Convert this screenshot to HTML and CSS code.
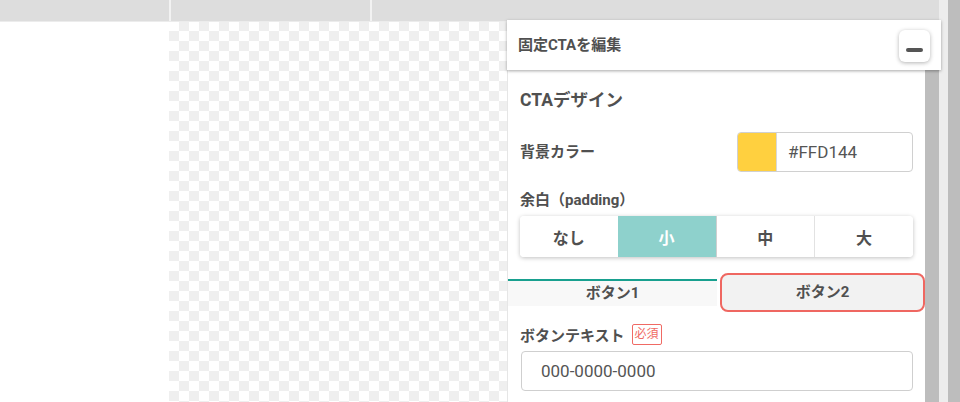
FILE: index.html
```html
<!DOCTYPE html>
<html lang="ja">
<head>
<meta charset="utf-8">
<title>固定CTAを編集</title>
<link rel="stylesheet" href="styles.css">
</head>
<body>
<div class="app">
  <div class="workspace">
    <div class="topbar">
      <div class="tb-cell tb-a"></div>
      <div class="tb-cell tb-b"></div>
      <div class="tb-cell tb-c"></div>
    </div>
    <div class="stage">
      <div class="sidebar"></div>
      <div class="canvas"></div>
    </div>

    <div class="panel">
      <div class="panel-head">
        <span class="panel-title">固定CTAを編集</span>
        <button class="min-btn" type="button" aria-label="最小化"><span class="dash"></span></button>
      </div>
      <div class="panel-body">
        <div class="panel-content">
          <div class="section">
            <h2 class="sec-title">CTAデザイン</h2>
            <div class="color-row">
              <span class="label">背景カラー</span>
              <div class="color-field">
                <span class="swatch"></span>
                <span class="color-value">#FFD144</span>
              </div>
            </div>
            <div class="label pad-label">余白（padding）</div>
            <div class="segments">
              <button class="seg" type="button">なし</button>
              <button class="seg active" type="button">小</button>
              <button class="seg" type="button">中</button>
              <button class="seg" type="button">大</button>
            </div>
          </div>
          <div class="tabs">
            <div class="tab tab-active">ボタン1</div>
            <div class="tab tab-focus">ボタン2</div>
          </div>
          <div class="section">
            <div class="field-label">
              <span class="label">ボタンテキスト</span>
              <span class="badge">必須</span>
            </div>
            <div class="text-input">000-0000-0000</div>
          </div>
        </div>
        <div class="panel-scroll"></div>
      </div>
    </div>
  </div>
  <div class="page-scroll">
    <div class="ps-track"></div>
    <div class="ps-bar"></div>
  </div>
</div>
</body>
</html>
```

FILE: styles.css
```css
* { box-sizing: border-box; }
html, body { margin: 0; padding: 0; }
body {
  width: 960px;
  height: 402px;
  overflow: hidden;
  font-family: Roboto, "Noto Sans CJK JP", sans-serif;
  color: #505050;
  background: #fff;
}
.app {
  display: flex;
  height: 402px;
}
.workspace {
  position: relative;
  width: 939px;
  display: flex;
  flex-direction: column;
}
.topbar {
  height: 22px;
  display: flex;
  background: #f2f2f2;
  gap: 2px;
  border-bottom: 1px solid #ececec;
}
.tb-cell { background: #dddddd; }
.tb-a { width: 169px; }
.tb-b { width: 199px; }
.tb-c { flex: 1; }
.stage {
  flex: 1;
  display: flex;
}
.sidebar {
  width: 169px;
  background: #fff;
}
.canvas {
  flex: 1;
  background-color: #fff;
  background-image: conic-gradient(#efefef 0 25%, #fff 0 50%, #efefef 0 75%, #fff 0);
  background-size: 20px 20px;
  background-position: 0 -1px;
}

/* floating panel */
.panel {
  position: absolute;
  left: 507px;
  top: 20px;
  width: 434px;
  bottom: 0;
  display: flex;
  flex-direction: column;
}
.panel-head {
  position: relative;
  z-index: 2;
  height: 50px;
  background: #fff;
  box-shadow: 0 1px 3px rgba(0,0,0,.35);
  display: flex;
  align-items: center;
  justify-content: space-between;
  padding: 0 11px 0 11px;
}
.panel-title {
  font-size: 15px;
  font-weight: 700;
  color: #505050;
  margin-top: -3px;
}
.min-btn {
  width: 31px;
  height: 32px;
  border: none;
  border-radius: 6px;
  background: #fff;
  box-shadow: 0 1px 4px rgba(0,0,0,.3);
  display: flex;
  align-items: flex-end;
  justify-content: center;
  padding: 0 0 10px;
  margin-top: 2px;
  margin-right: 0;
}
.dash {
  width: 17px;
  height: 4px;
  border-radius: 2px;
  background: #555;
}
.panel-body {
  flex: 1;
  width: 432px;
  display: flex;
  background: #fff;
  border-left: 1px solid #e6e6e6;
}
.panel-content {
  flex: 1;
}
.panel-scroll {
  width: 14px;
  background: #bdbdbd;
}
.section {
  padding: 0 12px;
}
.sec-title {
  margin: 18px 0 0;
  height: 24px;
  line-height: 24px;
  font-size: 17.5px;
  font-weight: 700;
  color: #505050;
}
.label {
  font-size: 15px;
  font-weight: 700;
  color: #505050;
}
.color-row {
  margin-top: 20px;
  height: 40px;
  display: flex;
  align-items: center;
  justify-content: space-between;
}
.color-row .label { margin-top: -4px; }
.color-field {
  width: 176px;
  height: 40px;
  display: flex;
  border: 1px solid #d0d0d0;
  border-radius: 4px;
  overflow: hidden;
}
.swatch {
  width: 39px;
  background: #ffd03f;
  border-right: 1px solid #d8d8d8;
}
.color-value {
  padding-left: 11px;
  line-height: 38px;
  font-size: 17px;
  color: #555;
}
.pad-label {
  margin-top: 18px;
  height: 20px;
  line-height: 20px;
}
.segments {
  margin-top: 6px;
  height: 41px;
  display: flex;
  border-radius: 4px;
  box-shadow: 0 1px 4px rgba(0,0,0,.25);
  overflow: hidden;
}
.seg {
  flex: 1;
  border: none;
  border-left: 1px solid #e2e2e2;
  background: #fff;
  font-family: inherit;
  font-size: 16px;
  font-weight: 700;
  color: #505050;
  padding: 0;
}
.seg:first-child { border-left: none; }
.seg.active {
  background: #8ed1cc;
  color: #fff;
  border-left: none;
}
.seg.active + .seg { border-left: 1px solid #cfcfcf; }
.tabs {
  margin-top: 16px;
  height: 39px;
  display: flex;
  align-items: flex-start;
}
.tab {
  font-size: 15px;
  font-weight: 700;
  color: #505050;
  text-align: center;
}
.tab-active {
  width: 209px;
  margin-top: 6px;
  height: 27px;
  line-height: 24px;
  border-top: 2px solid #18a08f;
  background: #f8f8f8;
}
.tab-focus {
  width: 205px;
  margin-left: 3px;
  height: 39px;
  line-height: 35px;
  border: 2px solid #ef6761;
  border-radius: 8px;
  background: #f2f2f2;
}
.field-label {
  margin-top: 12px;
  height: 21px;
  display: flex;
  align-items: center;
  gap: 7px;
}
.badge {
  height: 21px;
  padding: 0 2px;
  border: 1px solid #f06a64;
  border-radius: 2px;
  font-size: 12px;
  line-height: 19px;
  font-weight: 400;
  color: #f06a64;
}
.text-input {
  margin-top: 6px;
  margin-left: 1px;
  height: 40px;
  border: 1px solid #cfcfcf;
  border-radius: 4px;
  padding-left: 19px;
  line-height: 38px;
  font-size: 17px;
  color: #555;
}

.page-scroll {
  width: 21px;
  display: flex;
}
.ps-track { width: 9px; background: #ededed; }
.ps-bar { flex: 1; background: #bdbdbd; }
```
